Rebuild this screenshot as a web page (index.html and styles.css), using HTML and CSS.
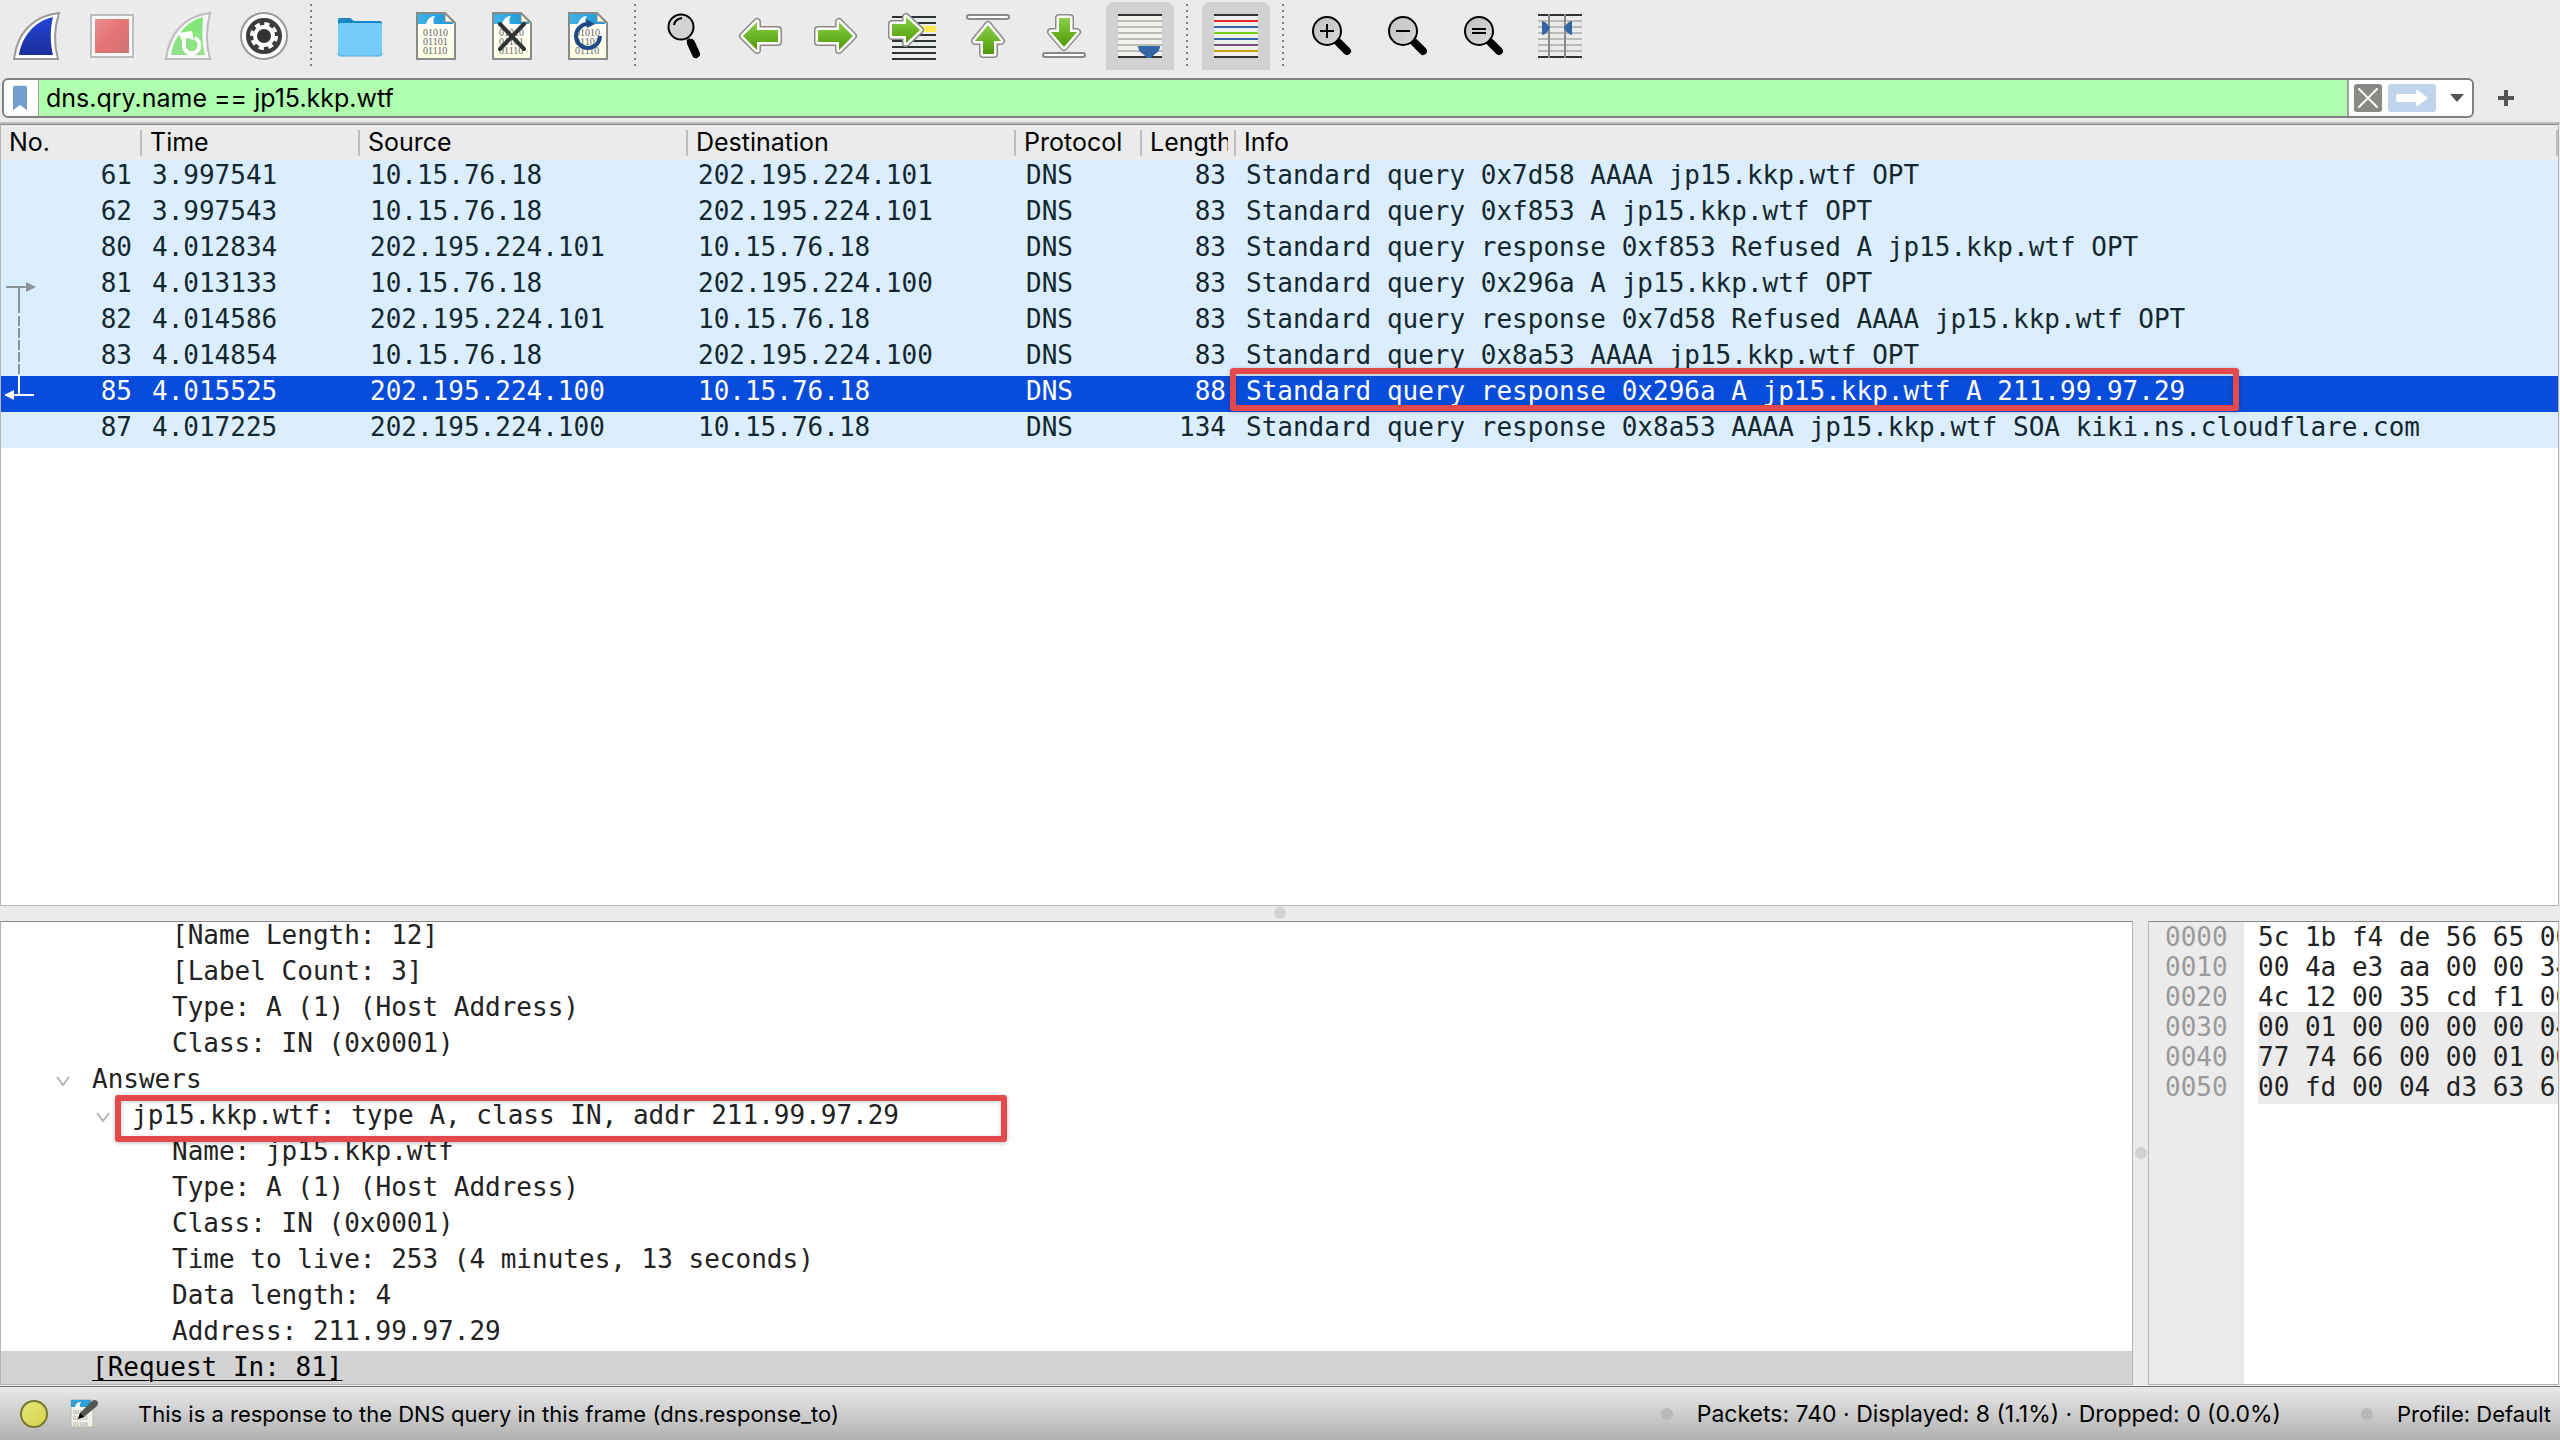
FILE: index.html
```html
<!DOCTYPE html>
<html lang="en">
<head>
<meta charset="utf-8">
<title>Packet capture</title>
<link rel="stylesheet" href="styles.css">
</head>
<body>
<svg class="defs" aria-hidden="true">
  <defs>
    <linearGradient id="green" x1="0" y1="0" x2="0" y2="1"><stop offset="0" stop-color="#8ad04a"/><stop offset="1" stop-color="#4e9a06"/></linearGradient>
    <linearGradient id="blue" x1="0" y1="0" x2="0" y2="1"><stop offset="0" stop-color="#1f46d8"/><stop offset="1" stop-color="#1c2f9c"/></linearGradient>
    <linearGradient id="lime" x1="0" y1="0" x2="0" y2="1"><stop offset="0" stop-color="#7ee873"/><stop offset="1" stop-color="#93e08c"/></linearGradient>
    <linearGradient id="red" x1="0" y1="0" x2="1" y2="1"><stop offset="0" stop-color="#e89090"/><stop offset=".5" stop-color="#e57373"/><stop offset="1" stop-color="#cf7474"/></linearGradient>
    <linearGradient id="sky" x1="0" y1="0" x2="1" y2="0"><stop offset="0" stop-color="#3fb4e8"/><stop offset="1" stop-color="#1a94d6"/></linearGradient>
    <linearGradient id="paper" x1="0" y1="0" x2="0" y2="1"><stop offset="0" stop-color="#ffffff"/><stop offset="1" stop-color="#fffee4"/></linearGradient>
    <linearGradient id="lens" x1="0" y1="0" x2="1" y2="1"><stop offset="0" stop-color="#c2c2c2"/><stop offset="1" stop-color="#d8d8d8"/></linearGradient>
    <symbol id="page" viewBox="0 0 48 48">
      <path d="M5 1h28l10 10v36H5z" fill="url(#paper)"/>
      <path d="M5 1h28l8 10v1H5z" fill="url(#sky)"/>
      <path d="M14 12c1-4 4-8 9-8-2 3-2 5-1 8z" fill="#fff"/>
      <path d="M33 1v9h10z" fill="#fffee4" stroke="#888a85" stroke-width="1"/>
      <path d="M5 1h28l10 10v36H5z" fill="none" stroke="#888a85" stroke-width="2"/>
      <g class="bits"><text x="11" y="24">01010</text><text x="11" y="33">01101</text><text x="11" y="42">01110</text></g>
    </symbol>
    <symbol id="glass" viewBox="0 0 48 48">
      <path d="M31 31l8 8" stroke="#000" stroke-width="8" stroke-linecap="round"/>
      <circle cx="19" cy="19" r="14" fill="url(#lens)" stroke="#000" stroke-width="2"/>
    </symbol>
  </defs>
</svg>

<header class="toolbar" role="toolbar">
  <button class="tool" aria-label="Start capture"><svg viewBox="0 0 48 48"><path d="M47 1C20 4 5 22 2 47h44c-4-14-4-30 1-46z" fill="#fff" stroke="#999" stroke-width="2"/><path d="M41 5C23 9 10 24 7 43h34c-3-12-3-26 0-38z" fill="url(#blue)"/></svg></button>
  <button class="tool" aria-label="Stop capture"><svg viewBox="0 0 48 48"><path d="M3 3h42v42H3z" fill="#f8f8f8" stroke="#bdbdbd" stroke-width="2"/><path d="M7 7h34v34H7z" fill="url(#red)"/></svg></button>
  <button class="tool" aria-label="Restart capture"><svg viewBox="0 0 48 48"><path d="M46 1C20 4 5 22 2 47h44c-4-14-4-30 0-46z" fill="#f8f8f8" stroke="#bdbdbd" stroke-width="2"/><path d="M39 5C23 9 10 24 7 43h34c-3-12-3-26-2-38z" fill="url(#lime)"/><path d="M31 26a8 8 0 1 1-11 5V23" fill="none" stroke="#fff" stroke-width="4"/><path d="M14 21l14-2 2 9-7-2-4 4z" fill="#fff"/></svg></button>
  <button class="tool" aria-label="Capture options"><svg viewBox="0 0 48 48"><circle cx="24" cy="24" r="23" fill="#fff" stroke="#999" stroke-width="2"/><circle cx="24" cy="24" r="18" fill="#3c3c3c"/><circle cx="24" cy="24" r="12" fill="none" stroke="#fff" stroke-width="4" stroke-dasharray="5 4.425"/><circle cx="24" cy="24" r="9" fill="#333" stroke="#fff" stroke-width="4"/></svg></button>
  <span class="divider"></span>
  <button class="tool" aria-label="Open file"><svg viewBox="0 0 48 48"><path d="M2 8q0-2 2-2h10l4 3h26q2 0 2 2v10H2z" fill="#1787c8"/><path d="M2 13q0-2 2-2h40q2 0 2 2v29q0 2-2 2H4q-2 0-2-2z" fill="#74cdf9"/><path d="M2 41q0 3 2 3h40q2 0 2-3" fill="none" stroke="#56a9dc"/></svg></button>
  <button class="tool" aria-label="Save file"><svg viewBox="0 0 48 48"><use href="#page"/></svg></button>
  <button class="tool" aria-label="Close file"><svg viewBox="0 0 48 48"><use href="#page"/><path d="M12 12l24 25M36 12L12 37" stroke="#2e3436" stroke-width="4" stroke-linecap="round"/></svg></button>
  <button class="tool" aria-label="Reload file"><svg viewBox="0 0 48 48"><use href="#page"/><path d="M25 12a12 12 0 1 0 11 12" fill="none" stroke="#204a87" stroke-width="4"/><path d="M22 7l9 5-8 4z" fill="#204a87"/></svg></button>
  <span class="divider"></span>
  <button class="tool" aria-label="Find packet"><svg viewBox="0 0 48 48"><path d="M28 27l2 3" stroke="#000" stroke-width="4"/><path d="M31 31l5 11" stroke="#000" stroke-width="8" stroke-linecap="round"/><circle cx="21" cy="15" r="12.500" fill="#d3d3d3" stroke="#000" stroke-width="2"/><path d="M14 13q1-6 8-7" fill="none" stroke="#000" stroke-width="2"/></svg></button>
  <button class="tool" aria-label="Previous packet"><svg class="arrow" viewBox="0 0 48 48"><path class="rim" d="M7 24L21 10V18H42V30H21V38z"/><path class="gap" d="M7 24L21 10V18H42V30H21V38z"/><path class="body" d="M7 24L21 10V18H42V30H21V38z"/></svg></button>
  <button class="tool" aria-label="Next packet"><svg class="arrow" viewBox="0 0 48 48"><path class="rim" d="M41 24L27 10V18H6V30H27V38z"/><path class="gap" d="M41 24L27 10V18H6V30H27V38z"/><path class="body" d="M41 24L27 10V18H6V30H27V38z"/></svg></button>
  <button class="tool" aria-label="Go to packet"><svg class="arrow" viewBox="0 0 48 48"><path d="M4 5h44M4 11h44M4 23h44M4 29h44M4 35h44M4 41h44M4 47h44" stroke="#2e3436" stroke-width="2"/><path d="M30 14h18v6H30z" fill="#fce94f"/><path class="rim" d="M32 18L18 5V12H4V24H18V31z"/><path class="gap" d="M32 18L18 5V12H4V24H18V31z"/><path class="body" d="M32 18L18 5V12H4V24H18V31z"/></svg></button>
  <button class="tool" aria-label="First packet"><svg class="arrow" viewBox="0 0 48 48"><rect class="bar" x="3" y="3" width="42" height="4" rx="2"/><path class="rim" d="M24 13L37 29H30V42H19V29H11z"/><path class="gap" d="M24 13L37 29H30V42H19V29H11z"/><path class="body" d="M24 13L37 29H30V42H19V29H11z"/></svg></button>
  <button class="tool" aria-label="Last packet"><svg class="arrow" viewBox="0 0 48 48"><rect class="bar" x="3" y="41" width="42" height="4" rx="2"/><path class="rim" d="M24 35L37 20H30V6H19V20H11z"/><path class="gap" d="M24 35L37 20H30V6H19V20H11z"/><path class="body" d="M24 35L37 20H30V6H19V20H11z"/></svg></button>
  <button class="tool pressed" aria-label="Auto scroll" aria-pressed="true"><svg viewBox="0 0 48 48"><path d="M2 2h44v44H2z" fill="#f0f0ee"/><path d="M2 9h44M2 15h44M2 21h44M2 27h44M2 33h44M2 39h44" stroke="#babdb6" stroke-width="2"/><path d="M2 3h44M2 45h44" stroke="#2e3436" stroke-width="2"/><path d="M22 34h22q0 5-5 8l-4 4h-4l-4-4q-5-3-5-8z" fill="#3465a4"/></svg></button>
  <span class="divider"></span>
  <button class="tool pressed" aria-label="Colorize" aria-pressed="true"><svg viewBox="0 0 48 48"><path d="M2 2h44v44H2z" fill="#f0f0ee"/><g stroke-width="2"><path d="M2 3h44M2 45h44" stroke="#2e3436"/><path d="M2 9h44" stroke="#ef2929"/><path d="M2 15h44M2 27h44" stroke="#3465a4"/><path d="M2 21h44" stroke="#73d216"/><path d="M2 33h44" stroke="#75507b"/><path d="M2 39h44" stroke="#c4a000"/></g></svg></button>
  <span class="divider"></span>
  <button class="tool" aria-label="Zoom in"><svg viewBox="0 0 48 48"><use href="#glass"/><path d="M12 19h14M19 12v14" stroke="#000" stroke-width="2"/></svg></button>
  <button class="tool" aria-label="Zoom out"><svg viewBox="0 0 48 48"><use href="#glass"/><path d="M12 19h14" stroke="#000" stroke-width="2"/></svg></button>
  <button class="tool" aria-label="Normal size"><svg viewBox="0 0 48 48"><use href="#glass"/><path d="M12 17h14M12 21h14" stroke="#000" stroke-width="2"/></svg></button>
  <button class="tool" aria-label="Resize columns"><svg viewBox="0 0 48 48"><path d="M2 9h44M2 15h44M2 21h44M2 27h44M2 33h44M2 39h44" stroke="#babdb6" stroke-width="2"/><path d="M2 3h44M2 45h44" stroke="#2e3436" stroke-width="2"/><path d="M13 2v44M29 2v44" stroke="#888a85" stroke-width="2"/><path d="M6 9q4 0 8 7-4 7-8 7zM36 9q-4 0-8 7 4 7 8 7z" fill="#3465a4"/></svg></button>
</header>

<form class="filter">
  <div class="filter-box">
    <button type="button" class="bookmark" aria-label="Bookmarks"><svg viewBox="0 0 16 28"><path d="M0 2q0-2 2-2h12q2 0 2 2v26l-8-6-8 6z" fill="#729fcf"/></svg></button>
    <input class="filter-input" type="text" aria-label="Display filter" value="dns.qry.name == jp15.kkp.wtf">
    <div class="filter-actions">
      <button type="reset" class="clear" aria-label="Clear"><svg viewBox="0 0 28 28"><rect width="28" height="28" rx="3" fill="#888a85"/><path d="M5 5l18 18M23 5L5 23" stroke="#fff" stroke-width="2" stroke-linecap="round"/></svg></button>
      <button type="button" class="apply" aria-label="Apply"><svg viewBox="0 0 48 28"><rect width="48" height="28" rx="3" fill="#bfd3ea"/><path d="M8 12q0-2 2-2h18V6q2 0 3 1l9 7-9 7q-1 1-3 1v-4H10q-2 0-2-2z" fill="#fff"/></svg></button>
      <button type="button" class="recent" aria-label="Recent filters"><svg viewBox="0 0 14 8"><path d="M0 0h14L7 8z" fill="#555"/></svg></button>
    </div>
  </div>
  <button type="button" class="add" aria-label="Add filter button"><svg viewBox="0 0 16 16"><path d="M6 0h4v6h6v4h-6v6H6v-6H0V6h6z" fill="#555"/></svg></button>
</form>

<main class="work">
  <section class="pane packets">
    <table>
      <colgroup><col class="c-no"><col class="c-time"><col class="c-addr"><col class="c-addr"><col class="c-proto"><col class="c-len"><col></colgroup>
      <thead><tr><th><span>No.</span></th><th><span>Time</span></th><th><span>Source</span></th><th><span>Destination</span></th><th><span>Protocol</span></th><th><span>Length</span></th><th><span>Info</span></th></tr></thead>
      <tbody>
        <tr><td>61</td><td>3.997541</td><td>10.15.76.18</td><td>202.195.224.101</td><td>DNS</td><td>83</td><td>Standard query 0x7d58 AAAA jp15.kkp.wtf OPT</td></tr>
        <tr><td>62</td><td>3.997543</td><td>10.15.76.18</td><td>202.195.224.101</td><td>DNS</td><td>83</td><td>Standard query 0xf853 A jp15.kkp.wtf OPT</td></tr>
        <tr><td>80</td><td>4.012834</td><td>202.195.224.101</td><td>10.15.76.18</td><td>DNS</td><td>83</td><td>Standard query response 0xf853 Refused A jp15.kkp.wtf OPT</td></tr>
        <tr><td class="related">81<svg class="link" viewBox="0 0 40 144"><g fill="none" stroke-width="2"><path d="M5 19h22M18 19v26" stroke="#8a9499"/><path d="M18 48v60" stroke="#8a9499" stroke-dasharray="10 2"/><path d="M18 108v19M11 127h22" stroke="#fff"/></g><path d="M25 14l10 5-10 5z" fill="#8a9499"/><path d="M13 122l-10 5 10 5z" fill="#fff"/></svg></td><td>4.013133</td><td>10.15.76.18</td><td>202.195.224.100</td><td>DNS</td><td>83</td><td>Standard query 0x296a A jp15.kkp.wtf OPT</td></tr>
        <tr><td>82</td><td>4.014586</td><td>202.195.224.101</td><td>10.15.76.18</td><td>DNS</td><td>83</td><td>Standard query response 0x7d58 Refused AAAA jp15.kkp.wtf OPT</td></tr>
        <tr><td>83</td><td>4.014854</td><td>10.15.76.18</td><td>202.195.224.100</td><td>DNS</td><td>83</td><td>Standard query 0x8a53 AAAA jp15.kkp.wtf OPT</td></tr>
        <tr class="selected"><td>85</td><td>4.015525</td><td>202.195.224.100</td><td>10.15.76.18</td><td>DNS</td><td>88</td><td class="marked">Standard query response 0x296a A jp15.kkp.wtf A 211.99.97.29<span class="mark mark-info"></span></td></tr>
        <tr><td>87</td><td>4.017225</td><td>202.195.224.100</td><td>10.15.76.18</td><td>DNS</td><td>134</td><td>Standard query response 0x8a53 AAAA jp15.kkp.wtf SOA kiki.ns.cloudflare.com</td></tr>
      </tbody>
    </table>
  </section>

  <div class="grip grip-row"></div>

  <div class="lower">
    <section class="pane details">
      <ul class="tree">
        <li class="l3">[Name Length: 12]</li>
        <li class="l3">[Label Count: 3]</li>
        <li class="l3">Type: A (1) (Host Address)</li>
        <li class="l3">Class: IN (0x0001)</li>
        <li class="l1 open"><svg viewBox="0 0 16 10"><path d="M2 1l6 8 6-8"/></svg>Answers</li>
        <li class="l2 open"><svg viewBox="0 0 16 10"><path d="M2 1l6 8 6-8"/></svg><span class="marked">jp15.kkp.wtf: type A, class IN, addr 211.99.97.29<span class="mark mark-answer"></span></span></li>
        <li class="l3">Name: jp15.kkp.wtf</li>
        <li class="l3">Type: A (1) (Host Address)</li>
        <li class="l3">Class: IN (0x0001)</li>
        <li class="l3">Time to live: 253 (4 minutes, 13 seconds)</li>
        <li class="l3">Data length: 4</li>
        <li class="l3">Address: 211.99.97.29</li>
        <li class="l1 current"><a href="#81">[Request In: 81]</a></li>
      </ul>
    </section>
    <div class="grip grip-col"></div>
    <section class="pane bytes">
      <div class="offsets">0000<br>0010<br>0020<br>0030<br>0040<br>0050</div>
      <div class="hex">
        <div>5c 1b f4 de 56 65 00<br>00 4a e3 aa 00 00 34<br>4c 12 00 35 cd f1 00</div>
        <div class="lit">00 01 00 00 00 00 04<br>77 74 66 00 00 01 00<br>00 fd 00 04 d3 63 61</div>
      </div>
    </section>
  </div>
</main>

<footer class="status">
  <button class="expert" aria-label="Expert information"></button>
  <button class="note" aria-label="Capture comment"><svg viewBox="0 0 30 30"><path d="M1 1h22v27H1z" fill="#f3f3e8" stroke="#b5b5ae"/><path d="M1 1h20v7H1z" fill="#2f9fd8"/><path d="M5 8q1-5 6-5-2 3-1 5z" fill="#fff"/><g class="bits small"><text x="3" y="15">00110</text><text x="3" y="21">01110</text><text x="3" y="27">01100</text></g><path d="M8 20l2-6L22 2q3-2 5 0t0 5L14 18z" fill="#555753"/><path d="M8 20l2-6 4 4z" fill="#000"/></svg></button>
  <span class="message">This is a response to the DNS query in this frame (dns.response_to)</span>
  <span class="counts">Packets: 740 · Displayed: 8 (1.1%) · Dropped: 0 (0.0%)</span>
  <span class="profile">Profile: Default</span>
</footer>
</body>
</html>
```
FILE: styles.css
```css
* { box-sizing: border-box; }

body {
  margin: 0;
  height: 100vh;
  display: flex;
  flex-direction: column;
  overflow: hidden;
  background: #ebebeb;
  color: #000;
  font: 25px/34px Inter, "Liberation Sans", sans-serif;
}

button { margin: 0; padding: 0; border: 0; background: none; display: block; }
svg { display: block; }
.defs { position: absolute; width: 0; height: 0; }

.bits { font: 10px "Liberation Serif", serif; fill: #666; }
.bits.small { font-size: 6px; fill: #999; }

/* toolbar */
.toolbar { display: flex; gap: 8px; padding: 2px 2px 8px; }
.tool { width: 68px; height: 68px; display: grid; place-items: center; }
.tool svg { width: 48px; height: 48px; overflow: visible; }
.tool.pressed { background: #d2d2d2; border-radius: 8px 8px 0 0; }
.divider {
  width: 12px;
  height: 64px;
  margin-top: 2px;
  background: repeating-linear-gradient(#808080 0 2px, transparent 2px 6px) 4px 0 / 2px 100% no-repeat;
}
.arrow path, .arrow rect { stroke-linejoin: round; }
.arrow .rim { stroke: #888a85; stroke-width: 8px; fill: #888a85; }
.arrow .gap { stroke: #fff; stroke-width: 5px; fill: #fff; }
.arrow .body { fill: url(#green); }
.arrow .bar { fill: #fff; stroke: #888a85; stroke-width: 2px; }

/* display filter */
.filter { display: flex; align-items: center; gap: 24px; padding: 0 46px 4px 2px; }
.filter-box {
  flex: 1;
  display: flex;
  height: 40px;
  border: 2px solid #808080;
  border-radius: 6px;
  background: #fff;
  overflow: hidden;
}
.bookmark { width: 34px; padding-right: 2px; display: grid; place-items: center; }
.bookmark svg { width: 14px; height: 28px; }
.filter-input {
  flex: 1;
  min-width: 0;
  border: solid #a0a0a0;
  border-width: 0 2px 0 1px;
  padding: 0 0 0 7px;
  background: #afffaf;
  color: #000;
  font: inherit;
  outline: 0;
}
.filter-actions { display: flex; align-items: center; gap: 6px; padding: 0 8px 0 5px; }
.clear svg { width: 28px; height: 28px; }
.apply svg { width: 48px; height: 28px; }
.recent { padding-left: 8px; }
.recent svg { width: 14px; height: 8px; }
.add svg { width: 16px; height: 16px; }

/* panes */
.work { flex: 1; min-height: 0; display: flex; flex-direction: column; border-top: 2px solid #bcbcbc; }
.pane { border: 1px solid #b4b4b4; border-top-color: #888; background: #fff; overflow: hidden; }
.packets { flex: 781 1 0; min-height: 0; margin-right: 1px; }
.lower { flex: 465 1 0; min-height: 0; display: flex; margin-right: 1px; }
.grip { display: grid; place-items: center; }
.grip::after { content: ""; width: 12px; height: 12px; border-radius: 50%; background: #d2d2d2; }
.grip-row { height: 15px; }
.grip-col { width: 15px; }

/* packet list */
table {
  width: 100%;
  table-layout: fixed;
  border-collapse: collapse;
  font: 26px/30px "DejaVu Sans Mono", monospace;
  color: #12272e;
}
.c-no { width: 141px; }
.c-time { width: 218px; }
.c-addr { width: 328px; }
.c-proto { width: 126px; }
.c-len { width: 94px; }
th {
  height: 35px;
  padding: 0 8px 2px;
  background: linear-gradient(#bebebe, #bebebe) right center / 2px 26px no-repeat #ebebeb;
  color: #000;
  font: 25px/32px Inter, "Liberation Sans", sans-serif;
  text-align: left;
  white-space: nowrap;
}
th span { display: block; overflow: hidden; }
td { height: 36px; padding: 0 10px 6px; white-space: nowrap; background: #daeeff; }
td:first-child, td:nth-child(6) { text-align: right; }
.selected td { background: #084cdb; color: #fff; }
.related, .marked { position: relative; }
.link { position: absolute; left: 0; top: 0; width: 40px; height: 144px; z-index: 1; }

.mark {
  position: absolute;
  border: 6px solid #e3484b;
  border-radius: 3px;
  box-shadow: 0 1px 4px #0004, inset 0 1px 4px #0003;
}
.mark-info { left: -6px; top: -8px; width: 1009px; height: 43px; }
.mark-answer { left: -17px; top: -4px; width: 892px; height: 47px; }

/* packet details */
.details { flex: 1; }
.tree {
  margin: -3px 0 0;
  padding: 0;
  list-style: none;
  font: 26px/32px "DejaVu Sans Mono", monospace;
  color: #222;
}
.tree li { height: 36px; padding-left: 171px; white-space: nowrap; }
.tree .l1 { padding-left: 91px; }
.tree .l2 { padding-left: 131px; }
.tree .open { display: flex; }
.tree .l1.open { padding-left: 54px; }
.tree .l2.open { padding-left: 94px; }
.tree svg { width: 16px; height: 10px; margin: 13px 21px 0 0; fill: none; stroke: #b4b4b4; stroke-width: 2px; }
.tree .current { background: #d3d3d3; }
.tree a { color: #000; text-decoration-thickness: 1px; text-underline-offset: 4px; }

/* packet bytes */
.bytes {
  flex: 0 0 411px;
  display: flex;
  font: 26px/30px "DejaVu Sans Mono", monospace;
  color: #222;
}
.offsets { flex: 0 0 95px; padding: 0 0 0 16px; background: #ebebeb; color: #999; }
.hex { flex: 1; min-width: 0; padding: 0 0 0 14px; white-space: nowrap; }
.hex .lit { background: #ebebeb; padding-bottom: 2px; }

/* status bar */
.status {
  display: flex;
  align-items: center;
  height: 54px;
  margin-top: 1px;
  padding: 0 9px 0 20px;
  border-top: 1px solid #707070;
  background: linear-gradient(#e9e9e9, #b1b1b1);
  font-size: 22px;
}
.expert { width: 28px; height: 28px; border: 2px solid #77772f; border-radius: 50%; background: linear-gradient(135deg, #e6e680, #d4d44a); }
.note { margin: 0 38px 0 22px; }
.note svg { width: 30px; height: 30px; }
.message { flex: 1; }
.counts, .profile { display: flex; align-items: center; }
.counts { margin-right: 80px; font-size: 23px; }
.counts::before, .profile::before {
  content: "";
  width: 12px;
  height: 12px;
  margin-right: 24px;
  border-radius: 50%;
  background: #b8b8b8;
}
```
